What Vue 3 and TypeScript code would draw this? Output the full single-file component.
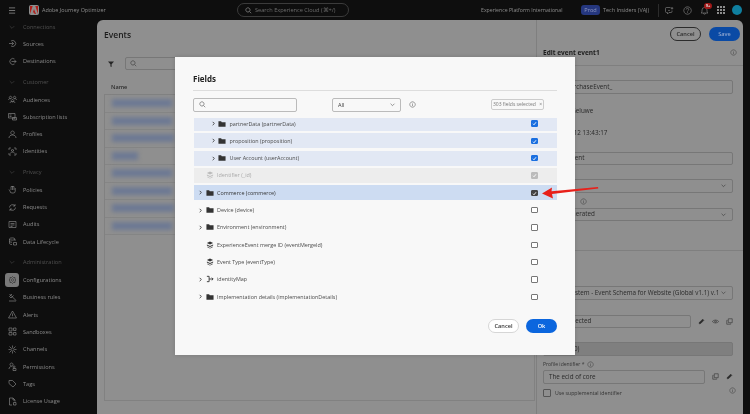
<script setup lang="ts">
const icons: Record<string, string> = {
  sources: "M2 9h9M8 6l3 3-3 3M6 4a6 6 0 1 1 0 10",
  destinations: "M7 9h9M13 6l3 3-3 3M13 4a6 6 0 1 0 0 10",
  audiences: "M5 2.5a2.5 2.5 0 1 0 .1 0zM13 2.5a2.5 2.5 0 1 0 .1 0zM9 9a2.5 2.5 0 1 0 .1 0zM1 10c0-2 2-3 4-3M17 10c0-2-2-3-4-3M4 16c0-2 2-3 5-3s5 1 5 3",
  lists: "M1 3h13v9H1zM3 6h4M3 9h4M9 11h8v5H9zM11 13.5h4",
  profiles: "M9 2a3.5 3.5 0 1 0 .1 0zM2 16c0-4 3-6 7-6s7 2 7 6",
  identities: "M2 6V2h4M12 2h4v4M2 12v4h4M16 12v4h-4M9 5a2 2 0 1 0 .1 0zM5 13c0-2 2-3 4-3s4 1 4 3",
  policies: "M6 3v7M9 2v8M12 3v7M14.5 6v6a4 4 0 0 1-4 4H8a4 4 0 0 1-4-4l-2-3M6 3h6",
  requests: "M3 9a6 6 0 0 1 11-3M15 9a6 6 0 0 1-11 3M14 2v4h-4M4 16v-4h4",
  audits: "M2 3h14v12H2zM5 7h8M5 10h8M5 13h4",
  lifecycle: "M3 4c0-3 11-3 11 0s-11 3-11 0zM3 4v9c0 1 2 2 5 2M14 4v4M3 8.500c0 1 2 2 5 2M11 11h6v5h-6z",
  configurations: "M9 3l2 2h3v3l2 2-2 2v3h-3l-2 2-2-2H4v-3l-2-2 2-2V5h3zM9 7.500a2.500 2.500 0 1 0 .1 0z",
  rules: "M3 2l8 8M8 2l-5 5 3 3 5-5M2 16h14M11 10l5 5",
  alerts: "M9 2l8 14H1zM9 7v5M9 13.500v1",
  sandboxes: "M2 2h6v6H2zM11 2h5v5h-5zM2 11h6v5H2zM11 11h5v5h-5z",
  channels: "M9 6a3 3 0 1 0 .1 0zM9 1v4M9 13v4M1 9h4M13 9h4M3 3l3 3M15 3l-3 3M3 15l3-3M15 15l-3-3",
  permissions: "M7 2a3 3 0 1 0 .1 0zM2 14c0-3 2-5 5-5M12 8a2 2 0 1 0 .1 0zM10 13h6v4h-6z",
  tags: "M2 3h7l7 7-6 6-8-7z",
  license: "M3 2h7l4 4v3M3 2v14h5M10 2v4h4M11 11h5v5h-5z",
  chevronDown: "M4 7l5 5 5-5",
  chevronRight: "M6 3l6 6-6 6",
  pencil: "M3 15l1-4 8-8 3 3-8 8z",
  eye: "M1 9c3-5 13-5 16 0-3 5-13 5-16 0zM9 7a2 2 0 1 0 .1 0z",
  copy: "M6 2h10v10H6zM12 14v2H2V6h2",
};

interface NavGroup {
  title: string;
  items: { label: string; icon: string; active?: boolean }[];
}

const navGroups: NavGroup[] = [
  {
    title: "Connections",
    items: [
      { label: "Sources", icon: "sources" },
      { label: "Destinations", icon: "destinations" },
    ],
  },
  {
    title: "Customer",
    items: [
      { label: "Audiences", icon: "audiences" },
      { label: "Subscription lists", icon: "lists" },
      { label: "Profiles", icon: "profiles" },
      { label: "Identities", icon: "identities" },
    ],
  },
  {
    title: "Privacy",
    items: [
      { label: "Policies", icon: "policies" },
      { label: "Requests", icon: "requests" },
      { label: "Audits", icon: "audits" },
      { label: "Data Lifecycle", icon: "lifecycle" },
    ],
  },
  {
    title: "Administration",
    items: [
      { label: "Configurations", icon: "configurations", active: true },
      { label: "Business rules", icon: "rules" },
      { label: "Alerts", icon: "alerts" },
      { label: "Sandboxes", icon: "sandboxes" },
      { label: "Channels", icon: "channels" },
      { label: "Permissions", icon: "permissions" },
      { label: "Tags", icon: "tags" },
      { label: "License Usage", icon: "license" },
    ],
  },
];

const blurWidths = [60, 60, 62, 26, 60, 60, 62, 60];

type FieldKind = "folder" | "leaf" | "map";

interface Field {
  label: string;
  kind: FieldKind;
  nested?: boolean;
  state: "" | "selected" | "disabled" | "current";
  checked: boolean;
}

const fields: Field[] = [
  { label: "partnerData (partnerData)", kind: "folder", nested: true, state: "selected", checked: true },
  { label: "proposition (proposition)", kind: "folder", nested: true, state: "selected", checked: true },
  { label: "User Account (userAccount)", kind: "folder", nested: true, state: "selected", checked: true },
  { label: "Identifier (_id)", kind: "leaf", state: "disabled", checked: true },
  { label: "Commerce (commerce)", kind: "folder", state: "current", checked: true },
  { label: "Device (device)", kind: "folder", state: "", checked: false },
  { label: "Environment (environment)", kind: "folder", state: "", checked: false },
  { label: "ExperienceEvent merge ID (eventMergeId)", kind: "leaf", state: "", checked: false },
  { label: "Event Type (eventType)", kind: "leaf", state: "", checked: false },
  { label: "identityMap", kind: "map", state: "", checked: false },
  { label: "Implementation details (implementationDetails)", kind: "folder", state: "", checked: false },
];
</script>

<template>
  <div class="page">
    <header class="topbar">
      <svg class="burger" viewBox="0 0 10 8"><path d="M1 1h7M1 4h7M1 7h7" /></svg>
      <span class="logo"><svg viewBox="0 0 10 10"><path d="M3.700 1H1v8zM6.300 1H9v8zM5 4l2 5H5.600L5 7.600H3.800z" /></svg></span>
      <span class="product">Adobe Journey Optimizer</span>
      <div class="global-search">
        <svg viewBox="0 0 18 18"><path d="M7.500 2a5.500 5.500 0 1 0 .1 0zM11.500 11.500L16 16" /></svg>
        <span>Search Experience Cloud (⌘+/)</span>
      </div>
      <div class="top-right">
        <span class="org">Experience Platform International</span>
        <span class="prod">Prod</span>
        <span class="sandbox">Tech Insiders (VAJ)</span>
        <span class="top-divider"></span>
        <svg class="top-icon" viewBox="0 0 18 18"><path d="M3 3h8M3 3a2 2 0 0 0-2 2v6a2 2 0 0 0 2 2h2v3l3-3h4a2 2 0 0 0 2-2V9M6 8c1 1.500 3 1.500 4 0M14 2v5M11.500 4.500h5" /></svg>
        <svg class="top-icon" viewBox="0 0 18 18"><path d="M9 1.500a7.500 7.500 0 1 0 .1 0zM6.500 7a2.500 2.500 0 1 1 3.500 2.300c-.7.3-1 .7-1 1.700M9 12.500v1.500" /></svg>
        <span class="bell">
          <svg class="top-icon" viewBox="0 0 18 18"><path d="M2 14c2-1 2-3 2-6a5 5 0 0 1 10 0c0 3 0 5 2 6zM7 14.500a2 2 0 0 0 4 0" /></svg>
          <b>9+</b>
        </span>
        <span class="apps"><i v-for="n in 9" :key="n"></i></span>
        <span class="avatar"></span>
      </div>
    </header>

    <div class="shell">
      <nav class="sidebar">
        <section v-for="group in navGroups" :key="group.title" class="nav-group">
          <div class="nav-title">
            <svg class="nav-chevron" viewBox="0 0 18 18"><path :d="icons.chevronDown" /></svg>
            <span>{{ group.title }}</span>
          </div>
          <div v-for="item in group.items" :key="item.label" class="nav-item">
            <span class="nav-icon" :class="{ active: item.active }">
              <svg viewBox="0 0 18 18"><path :d="icons[item.icon]" /></svg>
            </span>
            <span>{{ item.label }}</span>
          </div>
        </section>
      </nav>

      <main class="panel">
        <div class="events">
          <h1>Events</h1>
          <div class="events-tools">
            <svg class="filter" viewBox="0 0 10 10"><path d="M0 1h10L6 5.500V10L4 9V5.500z" /></svg>
            <div class="events-search">
              <svg viewBox="0 0 18 18"><path d="M7.500 2a5.500 5.500 0 1 0 .1 0zM11.500 11.500L16 16" /></svg>
            </div>
          </div>
          <div class="col-name">Name</div>
          <div class="table">
            <div v-for="(w, i) in blurWidths" :key="i" class="table-row">
              <span class="blur-bar" :style="{ width: w + 'px' }"></span>
            </div>
          </div>
        </div>

        <aside class="editor">
          <div class="editor-actions">
            <button class="btn-outline">Cancel</button>
            <button class="btn-save">Save</button>
          </div>
          <div class="editor-title">
            <strong>Edit event event1</strong>
            <svg class="info" viewBox="0 0 18 18"><path d="M9 2a7 7 0 1 0 .1 0zM9 8v5M9 5v1.500" /></svg>
          </div>
          <div class="form">
            <div class="input r1">demoPurchaseEvent_</div>
            <div class="static s1">W Van Geluwe</div>
            <div class="static s2">2023-10-12 13:43:17</div>
            <div class="input r2">Single event</div>
            <div class="input select r3">
              <svg viewBox="0 0 18 18"><path :d="icons.chevronDown" /></svg>
            </div>
            <div class="hint-row r4">
              <svg class="info" viewBox="0 0 18 18"><path d="M9 2a7 7 0 1 0 .1 0zM9 8v5M9 5v1.500" /></svg>
            </div>
            <div class="input select r5">
              Auto-generated
              <svg viewBox="0 0 18 18"><path :d="icons.chevronDown" /></svg>
            </div>
          </div>
          <div class="form form-lower">
            <div class="input select r6">
              Demo System - Event Schema for Website (Global v1.1) v.1
              <svg viewBox="0 0 18 18"><path :d="icons.chevronDown" /></svg>
            </div>
            <div class="with-actions r7">
              <div class="input grow">Items selected</div>
              <svg class="act" viewBox="0 0 18 18"><path class="solid" :d="icons.pencil" /></svg>
              <svg class="act" viewBox="0 0 18 18"><path :d="icons.eye" /></svg>
              <svg class="act" viewBox="0 0 18 18"><path :d="icons.copy" /></svg>
            </div>
            <div class="input disabled r8">Default (0)</div>
            <div class="id-label">
              Profile identifier *
              <svg class="info" viewBox="0 0 18 18"><path d="M9 2a7 7 0 1 0 .1 0zM9 8v5M9 5v1.500" /></svg>
            </div>
            <div class="with-actions r9">
              <div class="input grow">The ecid of core</div>
              <svg class="act" viewBox="0 0 18 18"><path :d="icons.copy" /></svg>
              <svg class="act" viewBox="0 0 18 18"><path class="solid" :d="icons.pencil" /></svg>
            </div>
            <div class="supplemental">
              <span class="box-small"></span>
              <span>Use supplemental identifier</span>
              <svg class="info" viewBox="0 0 18 18"><path d="M9 2a7 7 0 1 0 .1 0zM9 8v5M9 5v1.500" /></svg>
            </div>
          </div>
        </aside>
      </main>
    </div>

    <div class="dialog">
      <h2>Fields</h2>
      <div class="dialog-tools">
        <div class="dialog-search">
          <svg viewBox="0 0 18 18"><path d="M7.500 2a5.500 5.500 0 1 0 .1 0zM11.500 11.500L16 16" /></svg>
        </div>
        <div class="dialog-select">
          <span>All</span>
          <svg viewBox="0 0 18 18"><path :d="icons.chevronDown" /></svg>
        </div>
        <svg class="dialog-info" viewBox="0 0 18 18"><path d="M9 2a7 7 0 1 0 .1 0zM9 8v5M9 5v1.500" /></svg>
        <span class="tag">303 fields selected <em>×</em></span>
      </div>
      <div class="field-list">
        <div
          v-for="field in fields"
          :key="field.label"
          class="field"
          :class="[field.state, { nested: field.nested }]"
        >
          <svg v-if="field.kind !== 'leaf'" class="field-chevron" viewBox="0 0 18 18"><path :d="icons.chevronRight" /></svg>
          <span v-else class="field-chevron"></span>
          <svg v-if="field.kind === 'folder'" class="field-icon" viewBox="0 0 18 18"><path d="M1 3h6l1.500 2H17v10H1z" /></svg>
          <svg v-else-if="field.kind === 'leaf'" class="field-icon" viewBox="0 0 18 18"><path d="M9 1l7 3.500L9 8 2 4.500zM2 8l7 3.500L16 8v2l-7 3.500L2 10zM3 12.500l6 3 6-3V14l-6 3-6-3z" /></svg>
          <svg v-else class="field-icon map" viewBox="0 0 18 18"><path d="M2 3h5v12H2M7 9h9M13 6l3 3-3 3" /></svg>
          <span class="field-label">{{ field.label }}</span>
          <span class="check" :class="{ on: field.checked }">
            <svg v-if="field.checked" viewBox="0 0 10 10"><path d="M2 5.500L4 7.500 8 2.500" /></svg>
          </span>
        </div>
      </div>
      <div class="dialog-footer">
        <button class="dlg-cancel">Cancel</button>
        <button class="dlg-ok">Ok</button>
      </div>
    </div>

    <svg class="arrow" viewBox="0 0 60 14"><path d="M1 7.500L11 1.500L10.500 5.200L57 1L57.300 2.400L11 8L12 12.500z" fill="#e8201a" /></svg>
  </div>
</template>

<style>
html,
body {
  margin: 0;
  background: #0e0e0e;
}
</style>

<style scoped>
.page {
  position: relative;
  width: 750px;
  height: 414px;
  overflow: hidden;
  background: #0e0e0e;
  font-family: "Open Sans", "Noto Sans", sans-serif;
  font-size: 5.6px;
  color: #3a3a3a;
  filter: blur(0.4px);
}

svg {
  display: block;
  fill: none;
  stroke: currentColor;
  stroke-width: 1.4;
}

.topbar {
  height: 20px;
  display: flex;
  align-items: center;
  color: #8d8d8d;
  padding-left: 8px;
}

.burger {
  width: 9px;
  height: 7px;
  stroke-width: 0.9;
}

.logo {
  width: 10px;
  height: 10px;
  margin-left: 12px;
  background: #8d8d8d;
  border-radius: 2px;
  display: flex;
}

.logo svg {
  width: 10px;
  height: 10px;
  stroke: none;
  fill: #b3201a;
}

.product {
  margin-left: 3px;
  width: 195px;
  font-size: 5.450px;
}

.global-search {
  width: 110px;
  height: 12px;
  border: 0.7px solid #3b3b3b;
  border-radius: 7px;
  display: flex;
  align-items: center;
  color: #6e6e6e;
}

.global-search svg {
  width: 7px;
  height: 7px;
  margin: 0 3px 0 7px;
  color: #8d8d8d;
  stroke-width: 1.8;
}

.top-right {
  margin-left: 132px;
  display: flex;
  align-items: center;
  flex: 1;
}

.org {
  width: 100px;
  white-space: nowrap;
  font-size: 5.200px;
}

.prod {
  width: 19px;
  height: 10px;
  line-height: 10px;
  text-align: center;
  border-radius: 3px;
  background: #25377f;
  color: #8d97c0;
}

.sandbox {
  margin-left: 3px;
  width: 55px;
  white-space: nowrap;
  font-size: 5.450px;
}

.top-divider {
  width: 1px;
  height: 13px;
  background: #2c2c2c;
}

.top-icon {
  width: 9px;
  height: 9px;
  stroke-width: 1.2;
}

.top-divider + .top-icon {
  margin-left: 6px;
}

.top-icon + .top-icon {
  margin-left: 9px;
}

.bell {
  position: relative;
  margin-left: 8px;
}

.bell b {
  position: absolute;
  top: -3px;
  left: 4px;
  width: 8px;
  height: 6px;
  border-radius: 3px;
  background: #a01818;
  color: #ddd;
  font-size: 4px;
  line-height: 6px;
  text-align: center;
}

.apps {
  margin-left: 8px;
  width: 8px;
  display: grid;
  grid-template-columns: repeat(3, 2px);
  gap: 1px;
}

.apps i {
  height: 2px;
  background: #8d8d8d;
}

.avatar {
  width: 10px;
  height: 10px;
  margin-left: 7px;
  border-radius: 50%;
  background: #0f7f9f;
}

.shell {
  display: flex;
  height: 394px;
}

.sidebar {
  width: 96px;
  flex: none;
  color: #8a8a8a;
}

.nav-group {
  margin-bottom: 5.600px;
}

.nav-title {
  height: 13px;
  margin-bottom: 2.300px;
  display: flex;
  align-items: center;
  color: #505050;
}

.nav-chevron {
  width: 8px;
  height: 8px;
  margin: 0 7px 0 8px;
  stroke-width: 1.200;
}

.nav-item {
  height: 17.330px;
  display: flex;
  align-items: center;
  white-space: nowrap;
}

.nav-icon {
  width: 14px;
  height: 14px;
  margin: 0 4px 0 5px;
  display: flex;
  align-items: center;
  justify-content: center;
  border-radius: 3px;
}

.nav-icon svg {
  width: 9px;
  height: 9px;
  stroke-width: 1.300;
}

.nav-icon.active {
  background: #7a7a7a;
  color: #2d2d2d;
}

.panel {
  flex: 1;
  margin: 0 7px 0 1px;
  border-radius: 6px 6px 0 0;
  background: #8f8f8f;
  display: flex;
  overflow: hidden;
}

.events {
  width: 439px;
  flex: none;
  padding: 0 0 0 7px;
  box-sizing: border-box;
}

.events h1 {
  margin: 9px 0 0;
  font-size: 8.500px;
  line-height: 12px;
  font-weight: 600;
  color: #1d1d1d;
}

.events-tools {
  margin-top: 16px;
  display: flex;
  align-items: center;
  height: 13px;
}

.filter {
  width: 6px;
  height: 6px;
  margin-left: 4px;
  fill: #262626;
  stroke: none;
}

.events-search {
  margin-left: 11px;
  width: 100px;
  height: 13px;
  border: 0.7px solid #777;
  border-radius: 2px;
  display: flex;
  align-items: center;
  box-sizing: border-box;
}

.events-search svg {
  width: 7px;
  height: 7px;
  margin-left: 4px;
  color: #333;
}

.col-name {
  margin: 13px 0 0 7px;
  height: 8px;
  line-height: 8px;
  font-weight: 600;
  color: #2c2c2c;
}

.table {
  margin: 3px 0 0 0;
  height: 307px;
  border: 0.7px solid #818181;
  box-sizing: border-box;
  width: 431px;
}

.table-row {
  height: 17.500px;
  border-bottom: 0.7px solid #858585;
  box-sizing: border-box;
  display: flex;
  align-items: center;
  padding-left: 7px;
}

.blur-bar {
  height: 8px;
  background: #6d7993;
  filter: blur(2px);
}

.editor {
  flex: 1;
  min-width: 0;
  border-left: 1px solid #7f7f7f;
  position: relative;
}

.editor-actions {
  display: flex;
  justify-content: flex-end;
  gap: 8px;
  padding: 7px 3px 0 0;
}

.editor-actions button,
.dialog-footer button {
  height: 14px;
  width: 31px;
  padding: 0;
  border-radius: 7px;
  font: 600 5.600px "Open Sans", sans-serif;
}

.btn-outline {
  background: none;
  border: 1px solid #2c2c2c;
  color: #2c2c2c;
}

.btn-save {
  background: #0a4aa5;
  border: none;
  color: #8fa6d0;
}

.editor-title {
  margin: 5px 0 7px;
  height: 12px;
  padding: 0 6px;
  display: flex;
  align-items: center;
  justify-content: space-between;
  font-size: 6.500px;
  color: #1d1d1d;
}

.editor-title strong {
  font-weight: 700;
}

.info {
  width: 7px;
  height: 7px;
  color: #444;
}

.form {
  border-top: 1px solid #7f7f7f;
  padding: 0 10px 0 6px;
  height: 185px;
  box-sizing: border-box;
  position: relative;
  font-size: 6.300px;
}

.input {
  height: 13.500px;
  line-height: 12px;
  padding: 0 5px;
  border: 0.8px solid #777;
  border-radius: 2px;
  box-sizing: border-box;
  display: flex;
  align-items: center;
  justify-content: space-between;
  white-space: nowrap;
  overflow: hidden;
  color: #2a2a2a;
}

.input svg {
  width: 7px;
  height: 7px;
  flex: none;
}

.r1 {
  margin-top: 14px;
}

.static {
  padding-left: 5px;
  height: 8px;
  line-height: 8px;
  color: #2a2a2a;
}

.s1 {
  margin-top: 13px;
  padding-left: 8px;
}

.s2 {
  margin-top: 14px;
}

.r2 {
  margin-top: 15px;
}

.r3 {
  margin-top: 14px;
  justify-content: flex-end;
}

.hint-row {
  margin-top: 5px;
  height: 7px;
  padding-left: 37px;
}

.r5 {
  margin-top: 3px;
}

.form-lower {
  height: auto;
  padding-top: 35px;
}

.with-actions {
  display: flex;
  align-items: center;
}

.grow {
  flex: 1;
}

.act {
  width: 7px;
  height: 7px;
  margin-left: 7px;
  color: #2a2a2a;
}

.solid {
  fill: #2a2a2a;
}

.r7 {
  margin-top: 15px;
}

.r8 {
  margin-top: 14px;
  background: #7f7f7f;
}

.id-label {
  margin-top: 3.500px;
  height: 10px;
  display: flex;
  align-items: center;
  gap: 3px;
  font-size: 5px;
  color: #333;
}

.r9 {
  margin-top: 1px;
}

.supplemental {
  margin-top: 5.500px;
  display: flex;
  align-items: center;
  gap: 4px;
  position: relative;
  font-size: 5.200px;
  line-height: 8px;
  color: #333;
}

.supplemental .info {
  position: absolute;
  right: -3px;
  top: -2px;
}

.box-small {
  width: 6px;
  height: 6px;
  border: 1px solid #555;
  border-radius: 1px;
}

.dialog {
  position: absolute;
  left: 175px;
  top: 57px;
  width: 400px;
  height: 298px;
  padding: 0 18px;
  box-sizing: border-box;
  background: #f8f8f8;
  box-shadow: 0 0 4px rgba(0, 0, 0, 0.15);
  display: flex;
  flex-direction: column;
}

.dialog h2 {
  margin: 16px 0 0;
  height: 17px;
  line-height: 12px;
  font-size: 8px;
  font-weight: 700;
  color: #222;
  border-bottom: 1px solid #ddd;
}

.dialog-tools {
  margin-top: 6px;
  display: flex;
  align-items: center;
  height: 15px;
}

.dialog-search {
  width: 104px;
  height: 14px;
  border: 0.8px solid #bbb;
  border-radius: 2px;
  box-sizing: border-box;
  display: flex;
  align-items: center;
  color: #444;
}

.dialog-search svg {
  width: 7px;
  height: 7px;
  margin-left: 5px;
}

.dialog-select {
  margin-left: 35px;
  width: 69px;
  height: 14px;
  padding: 0 4px 0 5px;
  border: 0.8px solid #bbb;
  border-radius: 2px;
  box-sizing: border-box;
  display: flex;
  align-items: center;
  justify-content: space-between;
}

.dialog-select svg {
  width: 7px;
  height: 7px;
  color: #444;
}

.dialog-info {
  width: 7px;
  height: 7px;
  margin-left: 8px;
  color: #555;
}

.tag {
  margin-left: 75px;
  width: 53px;
  height: 11px;
  line-height: 9.500px;
  border: 0.8px solid #ccc;
  border-radius: 2px;
  box-sizing: border-box;
  text-align: center;
  white-space: nowrap;
  font-size: 5px;
  color: #777;
}

.tag em {
  font-style: normal;
  margin-left: 2px;
}

.field-list {
  margin: 6px 0 0 1px;
  width: 363px;
  height: 190px;
  overflow: hidden;
}

.field {
  height: 15px;
  margin-bottom: 2.330px;
  display: flex;
  align-items: center;
  padding-left: 4px;
  position: relative;
  color: #4a4a4a;
  font-size: 5.400px;
}

.field:first-child {
  height: 13px;
  padding-bottom: 2px;
  box-sizing: border-box;
}

.field.nested {
  padding-left: 16.500px;
}

.field.selected {
  background: #e2e8f4;
}

.field.disabled {
  background: #ededed;
  color: #aaa;
}

.field.current {
  background: #cddcf2;
  color: #333;
}

.field-chevron {
  width: 5px;
  height: 5px;
  flex: none;
  color: #333;
  stroke-width: 3;
}

.field-icon {
  width: 8px;
  height: 8px;
  margin-left: 2.500px;
  flex: none;
  fill: #333;
  stroke: none;
}

.field.disabled .field-icon {
  fill: #bbb;
}

.field-icon.map {
  fill: none;
  stroke: #333;
  stroke-width: 2;
}

.field-label {
  margin-left: 3.500px;
  white-space: nowrap;
}

.check {
  position: absolute;
  left: 337px;
  top: 50%;
  width: 6.500px;
  height: 6.500px;
  margin-top: -3.250px;
  border: 0.8px solid #777;
  border-radius: 1px;
  background: #fff;
  box-sizing: border-box;
}

.field:first-child .check {
  margin-top: -4.250px;
}

.check.on {
  background: #1a6fe0;
  border-color: #1a6fe0;
  color: #fff;
}

.check svg {
  width: 5px;
  height: 5px;
  stroke-width: 1.800;
}

.field.disabled .check {
  background: #bbb;
  border-color: #bbb;
}

.field.current .check {
  background: #444;
  border-color: #444;
}

.dialog-footer {
  margin-top: 11px;
  display: flex;
  justify-content: flex-end;
  gap: 7px;
}

.dlg-cancel {
  background: #fff;
  border: 1px solid #d6d6d6;
  color: #333;
}

.dlg-ok {
  background: #0b66de;
  border: none;
  color: #fff;
}

.arrow {
  position: absolute;
  left: 541px;
  top: 186px;
  width: 60px;
  height: 14px;
  stroke: none;
}
</style>
